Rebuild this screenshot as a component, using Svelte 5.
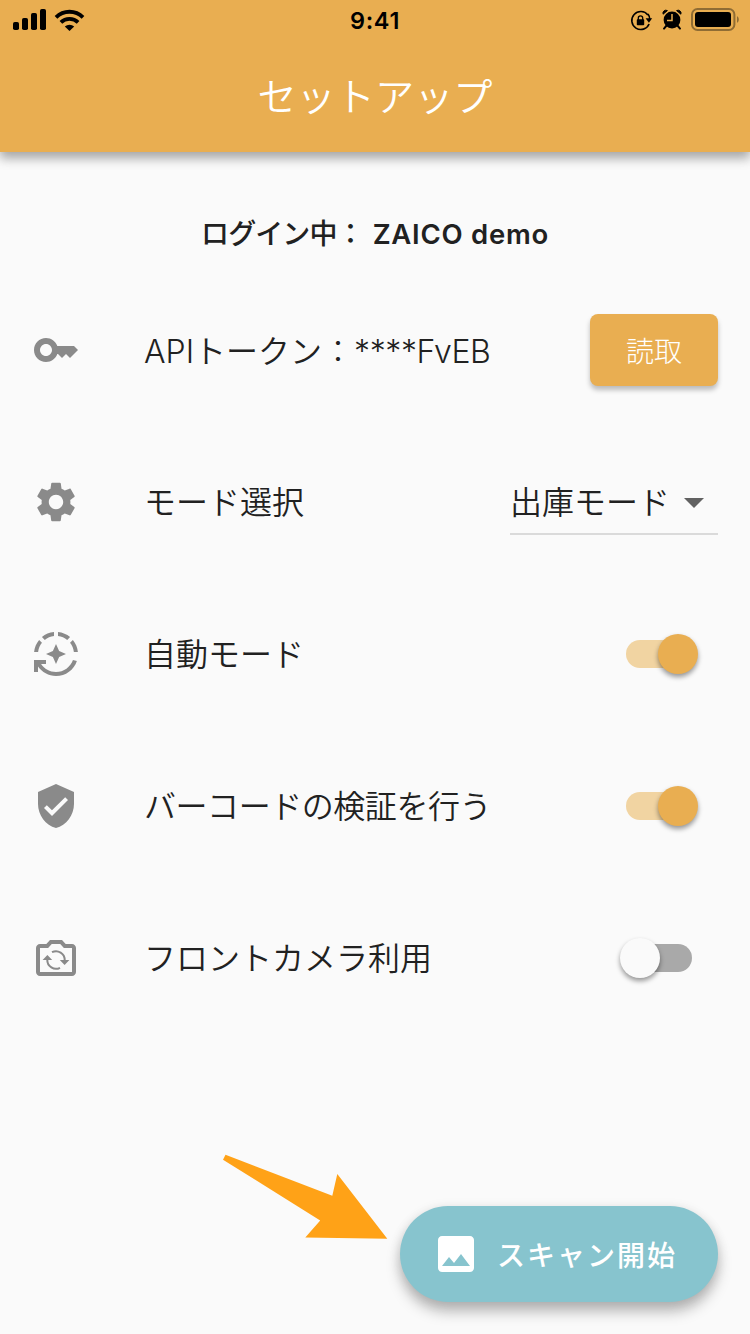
<script>
  let tokenTail = "FvEB";
  let mode = "出庫モード";
  let auto = true;
  let verify = true;
  let front = false;
</script>

{#snippet toggle(on, label, flip)}
  <button class="switch" class:on role="switch" aria-checked={on} aria-label={label} onclick={flip}>
    <span class="track"></span>
    <span class="thumb"></span>
  </button>
{/snippet}

<div class="screen">
  <header>
    <div class="status">
      <div class="side">
        <svg width="80" height="40" viewBox="0 0 80 40">
          <rect x="13" y="22" width="6" height="8" rx="1.8" />
          <rect x="22" y="18" width="6" height="12" rx="1.8" />
          <rect x="31" y="13" width="6" height="17" rx="1.8" />
          <rect x="40" y="9" width="6" height="21" rx="1.8" />
        </svg>
        <svg class="wifi" width="32" height="40" viewBox="0 0 32 40">
          <path d="M2 17.3a19.2 19.2 0 0 1 27 0" />
          <path d="M6.9 22.4a12.3 12.3 0 0 1 17.2 0" />
          <path class="dot" d="M15.5 31l-4.7-4.5a7 7 0 0 1 9.4 0z" />
        </svg>
      </div>
      <span class="time">9:41</span>
      <div class="side right">
        <svg width="122" height="40" viewBox="628 0 122 40">
          <path d="M647.9 15a9 9 0 1 0 1.2 9" fill="none" stroke="#000" stroke-width="1.6" />
          <path d="M648 14a9 9 0 0 1 1.7 5" fill="none" stroke="#000" stroke-width="1.6" />
          <path d="M645.6 18.2h6.6l-3.3 4.6z" />
          <rect x="636.8" y="19.3" width="7.4" height="6" rx=".8" />
          <path d="M638.3 20v-2a2.2 2.2 0 0 1 4.4 0v2" fill="none" stroke="#000" stroke-width="1.3" />
          <circle cx="672" cy="20" r="8.4" />
          <path d="M663.1 14.2a3 3 0 0 1 4.3-3.6zM680.9 14.2a3 3 0 0 0-4.3-3.6z" stroke="#000" />
          <path d="M667 25l-3 3.6M677 25l3 3.6" stroke="#000" stroke-width="2" stroke-linecap="round" />
          <path d="M672 14v6.4h-5" fill="none" stroke="#e9ae51" stroke-width="1.5" />
          <rect x="692" y="9" width="42.4" height="21" rx="5.5" fill="none" stroke="#8f6c34" stroke-width="2" />
          <rect x="695" y="12" width="36" height="15" rx="3" />
          <path d="M737 16.3c2.4.9 2.4 5.5 0 6.4z" fill="#8f6c34" />
        </svg>
      </div>
    </div>
    <h1>セットアップ</h1>
  </header>

  <main>
    <p class="account"><span class="ja">ログイン中：</span><span class="name">ZAICO demo</span></p>

    <div class="row">
      <svg class="icon" viewBox="0 0 24 24"><path d="M21 10h-8.35C11.83 7.67 9.61 6 7 6c-3.31 0-6 2.69-6 6s2.69 6 6 6c2.61 0 4.83-1.67 5.65-4H13l2 2 2-2 2 2 4-4.04L21 10zM7 15c-1.65 0-3-1.35-3-3s1.35-3 3-3 3 1.35 3 3-1.35 3-3 3z" /></svg>
      <span class="label token"><span class="latin">API</span>トークン<span class="colon">：</span><span class="latin tail">****{tokenTail}</span></span>
      <button class="read">読取</button>
    </div>

    <div class="row">
      <svg class="icon" viewBox="0 0 24 24"><path d="M19.14 12.94c.04-.3.06-.61.06-.94 0-.32-.02-.64-.07-.94l2.03-1.58c.18-.14.23-.41.12-.61l-1.92-3.32c-.12-.22-.37-.29-.59-.22l-2.39.96c-.5-.38-1.03-.7-1.62-.94l-.36-2.54c-.04-.24-.24-.41-.48-.41h-3.84c-.24 0-.43.17-.47.41l-.36 2.54c-.59.24-1.13.57-1.62.94l-2.39-.96c-.22-.08-.47 0-.59.22L2.74 8.87c-.12.21-.08.47.12.61l2.03 1.58c-.05.3-.09.63-.09.94s.02.64.07.94l-2.03 1.58c-.18.14-.23.41-.12.61l1.92 3.32c.12.22.37.29.59.22l2.39-.96c.5.38 1.03.7 1.62.94l.36 2.54c.05.24.24.41.48.41h3.84c.24 0 .44-.17.47-.41l.36-2.54c.59-.24 1.13-.56 1.62-.94l2.39.96c.22.08.47 0 .59-.22l1.92-3.32c.12-.22.07-.47-.12-.61l-2.01-1.58zM12 15.6c-1.98 0-3.6-1.62-3.6-3.6s1.62-3.6 3.6-3.6 3.6 1.62 3.6 3.6-1.62 3.6-3.6 3.6z" /></svg>
      <span class="label">モード選択</span>
      <button class="select">
        <span class="value">{mode}</span>
        <svg width="48" height="48" viewBox="0 0 24 24"><path d="M7 10l5 5 5-5z" /></svg>
      </button>
    </div>

    <div class="row">
      <svg class="icon" viewBox="0 0 24 24"><path d="M19.03 3.56c-1.67-1.39-3.74-2.3-6.03-2.51v2.01c1.73.19 3.31.88 4.61 1.92l1.42-1.42zM11 3.06V1.05C8.71 1.25 6.64 2.17 4.97 3.56l1.42 1.42C7.69 3.94 9.27 3.25 11 3.06zM4.98 6.39L3.56 4.97C2.17 6.64 1.26 8.71 1.05 11h2.01c.19-1.73.88-3.31 1.92-4.61zM20.94 11h2.01c-.21-2.29-1.12-4.36-2.51-6.03l-1.42 1.42c1.04 1.3 1.73 2.88 1.92 4.61zM7 12l3.44 1.56L12 17l1.56-3.44L17 12l-3.44-1.56L12 7l-1.56 3.44zM12 21c-3.11 0-5.85-1.59-7.46-4H7v-2H1v6h2v-2.7c1.99 2.84 5.27 4.7 9 4.7 4.87 0 9-3.17 10.44-7.56l-1.96-.45C19.25 18.48 15.92 21 12 21z" /></svg>
      <span class="label">自動モード</span>
      {@render toggle(auto, "自動モード", () => (auto = !auto))}
    </div>

    <div class="row">
      <svg class="icon" viewBox="0 0 24 24"><path d="M12 1L3 5v6c0 5.55 3.84 10.74 9 12 5.16-1.26 9-6.45 9-12V5l-9-4zm-2 16l-4-4 1.41-1.41L10 14.17l6.59-6.59L18 9l-8 8z" /></svg>
      <span class="label tight">バーコードの検証を行う</span>
      {@render toggle(verify, "バーコードの検証を行う", () => (verify = !verify))}
    </div>

    <div class="row">
      <svg class="icon" viewBox="0 0 24 24">
        <path d="M20 5h-3.17L15 3H9L7.17 5H4c-1.1 0-2 .9-2 2v12c0 1.1.9 2 2 2h16c1.1 0 2-.9 2-2V7c0-1.1-.9-2-2-2zm0 14H4V7h4.05l1.83-2h4.24l1.83 2H20v12z" />
        <path class="arc" d="M10 9.1a4.35 4.35 0 0 1 6.35 4M14 16.9a4.35 4.35 0 0 1-6.35-4" />
        <path d="M13.9 13h4.8l-2.4 2.5zM10.1 13H5.3l2.4-2.5z" />
      </svg>
      <span class="label">フロントカメラ利用</span>
      {@render toggle(front, "フロントカメラ利用", () => (front = !front))}
    </div>
  </main>

  <svg class="pointer" width="166" height="86" viewBox="222 1154 166 86">
    <path d="M225.5 1154.7L332.3 1195.7 337.3 1174 387.3 1238.8 305.3 1237.5 320.2 1220.4 223 1159.7z" />
  </svg>

  <button class="scan">
    <svg width="48" height="48" viewBox="0 0 24 24"><path d="M21 19V5c0-1.1-.9-2-2-2H5c-1.1 0-2 .9-2 2v14c0 1.1.9 2 2 2h14c1.1 0 2-.9 2-2zM8.5 13.5l2.5 3.01L14.5 12l4.5 6H5l3.5-4.5z" /></svg>
    <span>スキャン開始</span>
  </button>
</div>

<style>
  :global(body) { margin: 0; background: #fafafa; }
  .screen {
    position: relative;
    width: 750px;
    height: 1334px;
    overflow: hidden;
    background: #fafafa;
    color: #212121;
    font-family: "Noto Sans CJK JP", sans-serif;
    font-weight: 350;
  }
  button { border: 0; padding: 0; background: none; color: inherit; font: inherit; cursor: pointer; }
  svg { display: block; flex: none; }

  header { height: 152px; background: #e9ae51; box-shadow: 0 4px 10px rgba(0, 0, 0, .22), 0 8px 10px rgba(0, 0, 0, .16); }
  .status { display: flex; align-items: center; height: 40px; }
  .side { display: flex; flex: 1; }
  .side.right { justify-content: flex-end; }
  .side > svg:first-child:not(:last-child) { margin-right: -26px; }
  .wifi path { fill: none; stroke: #000; stroke-width: 3.8; }
  .wifi .dot { fill: #000; stroke: none; }
  .time { color: #000; font: 600 23.5px/40px Inter, sans-serif; letter-spacing: .7px; padding-top: 1px; }
  h1 { margin: 0; color: #fff; font-size: 39.2px; font-weight: 350; line-height: 108px; text-align: center; }

  .account { display: flex; justify-content: center; margin: 0; padding-top: 51px; height: 71px; line-height: 58px; font-size: 28px; font-weight: 500; }
  .ja { letter-spacing: -.9px; }
  .name { margin-left: 9px; font: 600 27.5px/62px Inter, sans-serif; letter-spacing: .75px; }
  .row { display: flex; align-items: center; height: 152px; padding: 0 32px; }
  .icon { width: 48px; height: 48px; fill: #8a8a8a; }
  .arc { fill: none; stroke: #8a8a8a; stroke-width: 1; }
  .label { flex: 1; margin-left: 64px; padding-bottom: 5px; font-size: 32px; line-height: 48px; white-space: nowrap; }
  .tight { letter-spacing: -.45px; }
  .token { padding-bottom: 0; }
  .colon { font-weight: 300; }
  .latin { font-family: Inter, sans-serif; font-weight: 350; }
  .tail { letter-spacing: -.4px; }

  .read { width: 128px; height: 72px; padding-bottom: 1px; border-radius: 8px; background: #e9ae51; color: #fff; font-size: 28px; font-weight: 300; box-shadow: 0 4px 5px rgba(0, 0, 0, .25); }
  .select { display: flex; align-items: center; width: 208px; height: 66px; padding-top: 2px; border-bottom: 2px solid #dadada; font-size: 32px; line-height: 48px; }
  .value { padding-bottom: 5px; }
  .select svg { fill: #616161; }

  .switch { display: flex; align-items: center; width: 80px; height: 40px; margin-right: 20px; }
  .track { width: 66px; height: 28px; margin-left: 8px; border-radius: 14px; background: #a9a9a9; }
  .thumb { flex: none; width: 40px; height: 40px; margin-left: -72px; border-radius: 50%; background: #fafafa; box-shadow: 0 3px 5px rgba(0, 0, 0, .4); }
  .on .track { background: #f1d4a2; }
  .on .thumb { margin-left: -34px; background: #e9ae51; }

  /* floats over the list, bottom right */
  .scan {
    position: absolute;
    right: 32px;
    bottom: 32px;
    display: flex;
    align-items: center;
    width: 318px;
    height: 96px;
    padding-left: 32px;
    border-radius: 48px;
    background: #87c4ce;
    color: #fff;
    font-size: 28px;
    font-weight: 500;
    letter-spacing: 2px;
    box-shadow: 0 10px 14px rgba(0, 0, 0, .25), 0 2px 12px rgba(0, 0, 0, .1);
  }
  .scan svg { margin-right: 17px; fill: #fff; }
  .scan span { padding-bottom: 1px; }
  .pointer { position: absolute; left: 222px; top: 1154px; fill: #ffa217; }
</style>
